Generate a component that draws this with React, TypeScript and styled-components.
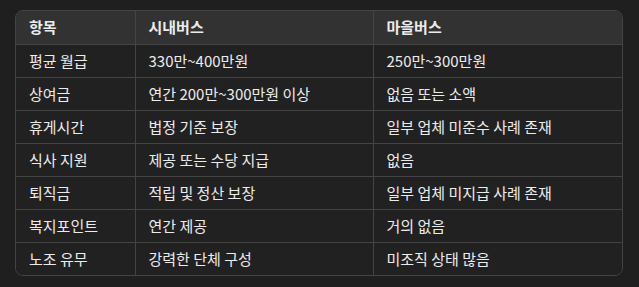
import React from "react";
import styled, { createGlobalStyle } from "styled-components";

const Global = createGlobalStyle`
  html, body { margin: 0; padding: 0; background: #1f1f1f; }
  body { font-family: "Noto Sans CJK KR", "Noto Sans", sans-serif; }
`;

const Page = styled.div`
  padding: 10px 16px 13px 15px;
  width: 639px;
  box-sizing: border-box;
`;

const Frame = styled.div`
  border: 1px solid #444444;
  border-radius: 8px;
  overflow: hidden;
  width: 608px;
  box-sizing: border-box;
`;

const Table = styled.table`
  width: 100%;
  border-collapse: collapse;
  table-layout: fixed;
  color: #ececec;
  font-size: 15px;
`;

const Col = styled.col<{ $w?: number }>`
  width: ${(p) => (p.$w ? `${p.$w}px` : "auto")};
`;

const HeadRow = styled.tr`
  background: #323232;
  height: 33px;
`;

const Row = styled.tr`
  background: #212121;
  height: 33px;
`;

const Th = styled.th`
  text-align: left;
  font-weight: 700;
  padding: 0 13px;
  line-height: 20px;
  border-bottom: 1px solid #444444;
  border-right: 1px solid #444444;
  &:last-child { border-right: none; }
`;

const Td = styled.td`
  padding: 0 13px;
  line-height: 20px;
  border-bottom: 1px solid #444444;
  border-right: 1px solid #444444;
  white-space: nowrap;
  &:last-child { border-right: none; }
  tr:last-child > & { border-bottom: none; }
`;

const rows: [string, string, string][] = [
  ["평균 월급", "330만~400만원", "250만~300만원"],
  ["상여금", "연간 200만~300만원 이상", "없음 또는 소액"],
  ["휴게시간", "법정 기준 보장", "일부 업체 미준수 사례 존재"],
  ["식사 지원", "제공 또는 수당 지급", "없음"],
  ["퇴직금", "적립 및 정산 보장", "일부 업체 미지급 사례 존재"],
  ["복지포인트", "연간 제공", "거의 없음"],
  ["노조 유무", "강력한 단체 구성", "미조직 상태 많음"],
];

export default function App() {
  return (
    <>
      <Global />
      <Page>
        <Frame>
          <Table>
            <colgroup>
              <Col $w={119} />
              <Col $w={238} />
              <Col />
            </colgroup>
            <thead>
              <HeadRow>
                <Th>항목</Th>
                <Th>시내버스</Th>
                <Th>마을버스</Th>
              </HeadRow>
            </thead>
            <tbody>
              {rows.map((r) => (
                <Row key={r[0]}>
                  <Td>{r[0]}</Td>
                  <Td>{r[1]}</Td>
                  <Td>{r[2]}</Td>
                </Row>
              ))}
            </tbody>
          </Table>
        </Frame>
      </Page>
    </>
  );
}
